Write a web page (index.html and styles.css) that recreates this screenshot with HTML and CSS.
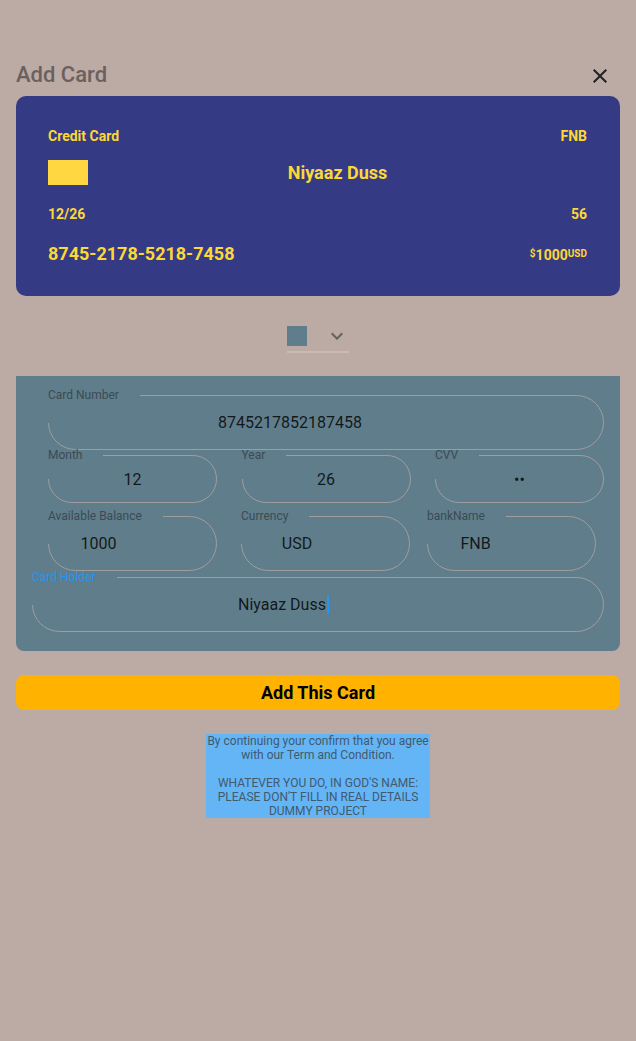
FILE: index.html
```html
<!DOCTYPE html>
<html lang="en">
<head>
<meta charset="utf-8">
<title>Add Card</title>
<link rel="stylesheet" href="styles.css">
</head>
<body>
<main class="page">
  <header class="topbar">
    <h1 class="title">Add Card</h1>
    <button class="close" type="button" aria-label="Close">
      <svg viewBox="0 0 24 24" width="24" height="24"><path d="M19 6.41L17.59 5 12 10.59 6.41 5 5 6.41 10.59 12 5 17.59 6.41 19 12 13.41 17.59 19 19 17.59 13.41 12z"/></svg>
    </button>
  </header>

  <section class="card">
    <div class="card-row r1"><span>Credit Card</span><span>FNB</span></div>
    <div class="card-row r2"><span class="chip"></span><span class="holder">Niyaaz Duss</span></div>
    <div class="card-row r3"><span>12/26</span><span>56</span></div>
    <div class="card-row r4"><span class="number">8745-2178-5218-7458</span><span class="amount"><span class="cur-sym">$</span>1000<span class="cur-code">USD</span></span></div>
  </section>

  <div class="picker">
    <div class="picker-row">
      <span class="swatch"></span>
      <svg viewBox="0 0 24 24" width="24" height="24"><path d="M16.59 8.59L12 13.17 7.41 8.59 6 10l6 6 6-6z"/></svg>
    </div>
    <div class="picker-line"></div>
  </div>

  <form class="panel">
    <div class="row row-inset">
      <div class="field tall wide">
        <span class="f-label">Card Number</span>
        <span class="f-value pad-72">8745217852187458</span>
      </div>
    </div>
    <div class="row row-inset row-spread row-2">
      <div class="field short third">
        <span class="f-label">Month</span>
        <span class="f-value">12</span>
      </div>
      <div class="field short third">
        <span class="f-label">Year</span>
        <span class="f-value">26</span>
      </div>
      <div class="field short third">
        <span class="f-label">CVV</span>
        <span class="f-value">••</span>
      </div>
    </div>
    <div class="row row-inset row-gap row-3">
      <div class="field tall third">
        <span class="f-label">Available Balance</span>
        <span class="f-value pad-68">1000</span>
      </div>
      <div class="field tall third">
        <span class="f-label">Currency</span>
        <span class="f-value pad-57">USD</span>
      </div>
      <div class="field tall third bank">
        <span class="f-label">bankName</span>
        <span class="f-value pad-72">FNB</span>
      </div>
    </div>
    <div class="row row-4">
      <div class="field tall wide">
        <span class="f-label focused">Card Holder</span>
        <span class="f-value pad-72">Niyaaz Duss<span class="cursor"></span></span>
      </div>
    </div>
  </form>

  <button class="submit" type="button">Add This Card</button>

  <p class="terms">By continuing your confirm that you agree<br>with our Term and Condition.<br><br>WHATEVER YOU DO, IN GOD'S NAME:<br>PLEASE DON'T FILL IN REAL DETAILS<br>DUMMY PROJECT</p>
</main>
</body>
</html>
```

FILE: styles.css
```css
html {
  background: #bcaaa4;
}

body {
  margin: 0;
  font-family: Roboto, "Noto Sans", sans-serif;
  color: #212121;
}

.page {
  padding: 0 16px;
}

/* header */
.topbar {
  display: flex;
  align-items: center;
  justify-content: space-between;
  padding-top: 56px;
  height: 40px;
}

.title {
  margin: -2px 0 0;
  font-size: 22px;
  line-height: 26px;
  font-weight: 500;
  color: #6a615e;
}

.close {
  display: flex;
  width: 24px;
  height: 24px;
  margin-right: 8px;
  padding: 0;
  border: 0;
  background: none;
}

.close svg {
  fill: #212121;
}

/* credit card */
.card {
  box-sizing: border-box;
  height: 200px;
  padding: 32px 33px 32px 32px;
  border-radius: 10px;
  background: #343a84;
  color: #fdd835;
  font-weight: 700;
}

.card-row {
  display: flex;
  justify-content: space-between;
}

.r1,
.r3 {
  font-size: 14px;
  line-height: 16px;
}

.r2 {
  margin-top: 16px;
  height: 25px;
  align-items: center;
}

.r3 {
  margin-top: 21px;
}

.chip {
  width: 40px;
  height: 25px;
  background: #ffd740;
}

.holder {
  flex: 1;
  text-align: center;
  font-size: 18px;
  line-height: 21px;
}

.r4 {
  margin-top: 21px;
  align-items: baseline;
  font-size: 18px;
  line-height: 21px;
}

.amount {
  font-size: 14px;
  line-height: 14px;
}

.cur-sym,
.cur-code {
  font-size: 10px;
  line-height: 11px;
  vertical-align: top;
}

/* colour picker */
.picker {
  width: 62px;
  margin: 28px auto 0;
}

.picker-row {
  display: flex;
  align-items: center;
  height: 24px;
}

.swatch {
  width: 20px;
  height: 20px;
  margin-right: 18px;
  background: #607d8b;
}

.picker-row svg {
  fill: #616161;
}

.picker-line {
  margin-top: 3px;
  height: 2px;
  background: #c8bbb7;
}

/* form panel */
.panel {
  margin: 23px 0 0;
  padding: 19px 16px;
  background: #607d8b;
  border-radius: 0 0 8px 8px;
}

.row {
  display: flex;
}

.row-inset {
  margin-left: 16px;
}

.row-spread {
  justify-content: space-between;
}

.row-gap {
  gap: 24px;
}

.row-2 {
  margin-top: 5px;
}

.row-3 {
  margin-top: 13px;
}

.row-4 {
  margin-top: 6px;
}

.field {
  position: relative;
  box-sizing: border-box;
  display: flex;
  align-items: center;
  border: 1px solid #9e9e9e;
  border-radius: 30px;
}

.tall {
  height: 55px;
}

.short {
  height: 48px;
}

.wide {
  flex: 1;
}

.third {
  width: 169px;
}

.bank {
  margin-left: -7px;
}

/* floating label: text sits on the outline, the cover starts at the outline
   and hides the top-left corner of the border down to its middle */
.f-label {
  position: absolute;
  left: -1px;
  top: -9px;
  height: calc(50% + 9px);
  padding-right: 21px;
  background: linear-gradient(#607d8b, #607d8b) no-repeat 0 8px / 100% 100%;
  font-size: 12px;
  line-height: 16px;
  color: #3a4b53;
}

.f-label.focused {
  color: #2196f3;
}

.f-value {
  position: relative;
  z-index: 1;
  flex: 1;
  text-align: center;
  font-size: 16px;
  line-height: 19px;
  color: rgba(0, 0, 0, 0.82);
}

.pad-72 {
  padding-right: 72px;
}

.pad-68 {
  padding-right: 68px;
}

.pad-57 {
  padding-right: 57px;
}

.cursor {
  display: inline-block;
  width: 2px;
  height: 19px;
  margin-right: -3px;
  margin-left: 1px;
  vertical-align: -4px;
  background: #2196f3;
}

/* submit */
.submit {
  display: block;
  width: 100%;
  height: 35px;
  margin-top: 24px;
  padding: 0;
  border: 0;
  border-radius: 8px;
  background: #ffb300;
  font-family: Roboto, "Noto Sans", sans-serif;
  font-size: 18px;
  font-weight: 700;
  color: #000;
}

/* terms */
.terms {
  width: fit-content;
  margin: 24px auto 0;
  padding: 0 1px;
  background: #64b5f6;
  font-size: 12px;
  line-height: 14px;
  text-align: center;
  color: #42596e;
}
```
